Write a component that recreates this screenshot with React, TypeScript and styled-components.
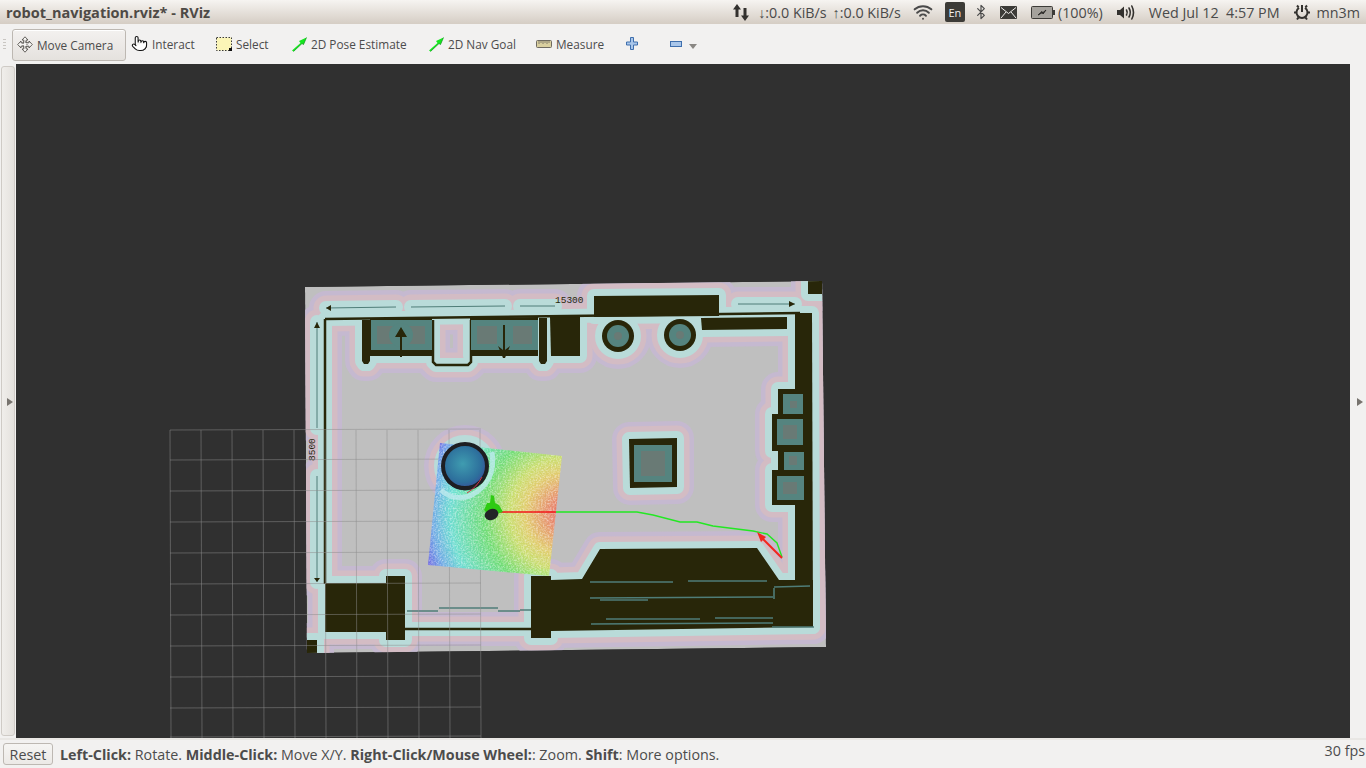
import React from "react"
import styled, { createGlobalStyle } from "styled-components"
import { Bluetooth, Pointer, Wifi } from "lucide-react"

const UI_FONT = `"Open Sans", "Noto Sans", "Liberation Sans", sans-serif`

const GlobalStyle = createGlobalStyle`
  html, body { margin: 0; padding: 0; overflow: hidden; }
  body { font-family: ${UI_FONT}; color: #4c4c4c; }
`

const Page = styled.div`
  width: 1366px;
  height: 768px;
  display: flex;
  flex-direction: column;
  background: #f2f1f0;
`

const TitleBar = styled.div`
  height: 24px;
  flex: none;
  display: flex;
  align-items: center;
  justify-content: space-between;
  padding: 0 6px;
  background: linear-gradient(#f6f4f1, #d5cdc4);
`

const WindowTitle = styled.div`
  font-size: 14.5px;
  font-weight: 700;
  color: #4e4a46;
`

const Indicators = styled.div`
  display: flex;
  align-items: center;
  height: 24px;
  font-size: 14.3px;
  color: #4a4a4a;
  white-space: nowrap;
`

const Indicator = styled.span<{ $left: number }>`
  display: flex;
  align-items: center;
  margin-left: ${p => p.$left}px;
`

const LangBox = styled.span`
  display: flex;
  align-items: center;
  justify-content: center;
  width: 20px;
  height: 20px;
  border-radius: 2px;
  background: #3c3b37;
  color: #f2f1f0;
  font-size: 11px;
`

const Toolbar = styled.div`
  height: 40px;
  flex: none;
  display: flex;
  align-items: center;
  padding-left: 3px;
  background: #f2f1f0;
  font-size: 11.8px;
`

const Grip = styled.div`
  width: 3px;
  height: 11px;
  margin-right: 6px;
  background: repeating-linear-gradient(#c9c6c2 0 1px, transparent 1px 3px);
`

const ToolButton = styled.div<{ $active?: boolean; $width: number; $gap?: number; $pad?: number }>`
  display: flex;
  align-items: center;
  gap: ${p => p.$gap ?? 3}px;
  width: ${p => p.$width}px;
  height: ${p => (p.$active ? 32 : 20)}px;
  flex: none;
  box-sizing: border-box;
  white-space: nowrap;
  padding-left: ${p => p.$pad ?? 4}px;
  border: ${p => (p.$active ? "1px solid #bdb8b2" : "none")};
  border-radius: 3px;
  background: ${p => (p.$active ? "linear-gradient(#f3f1ef, #e5e2de)" : "transparent")};
  box-shadow: ${p => (p.$active ? "0 1px 0 #fff inset" : "none")};
  margin-top: ${p => (p.$active ? 1 : -1)}px;
`

const Main = styled.div`
  flex: 1;
  min-height: 0;
  display: flex;
`

const Dock = styled.div`
  width: 16px;
  flex: none;
  box-sizing: border-box;
  display: flex;
  align-items: center;
  justify-content: center;
`

const LeftHandle = styled(Dock)`
  margin: 2px 1px;
  width: 14px;
  border: 1px solid #cfcbc6;
  border-radius: 3px;
  background: linear-gradient(90deg, #f0eeeb, #e4e1dd);
`

const Arrow = styled.div`
  width: 0;
  height: 0;
  margin: 2px 0 0 4px;
  border-top: 4px solid transparent;
  border-bottom: 4px solid transparent;
  border-left: 6px solid #77736e;
`

const Viewport = styled.svg`
  flex: 1;
  display: block;
  width: 1334px;
  height: 674px;
  background: #303030;
`

const StatusBar = styled.div`
  height: 30px;
  flex: none;
  box-sizing: border-box;
  display: flex;
  align-items: center;
  border-top: 2px solid #e9e7e4;
  padding: 0 1px 0 3px;
  font-size: 14.3px;
  background: #f2f1f0;
`

const ResetButton = styled.div`
  width: 50px;
  height: 22px;
  box-sizing: border-box;
  display: flex;
  align-items: center;
  justify-content: center;
  margin-right: 7px;
  border: 1px solid #bdb8b2;
  border-radius: 3px;
  background: linear-gradient(#f6f5f3, #ece9e6);
`

const Hint = styled.div`
  flex: 1;
  white-space: nowrap;
`

const Fps = styled.div`
  margin-top: -8px;
`

const CaretSvg = styled.svg`
  margin-top: 6px;
`

const GREEN = "#14e81e"

const PoseIcon = () => (
  <svg width="17" height="16" viewBox="0 0 17 16">
    <path d="M1 14.5 L9.5 7 L8 5 L15.5 1.5 L12.5 8.5 L11 7.5 L2.5 15.5 Z" fill={GREEN} />
    <path d="M2.5 15.5 L11 7.5 L12.5 8.5 L15.5 1.5" fill="none" stroke="#0b8f16" strokeWidth=".7" />
  </svg>
)

const MoveIcon = () => (
  <svg width="16" height="17" viewBox="0 0 16 17" fill="#f4f3f1" stroke="#55524e" strokeWidth=".9">
    <path d="M8 .8 L11 4 H9.2 V6.8 H12 V5 L15.3 8.5 L12 12 V10.2 H9.2 V13 H11 L8 16.2 L5 13 H6.8 V10.2 H4 V12 L.7 8.5 L4 5 V6.8 H6.8 V4 H5 Z" />
    <rect x="6" y="6" width="4" height="5" fill="none" strokeDasharray="1 1" />
  </svg>
)

const SelectIcon = () => (
  <svg width="16" height="14" viewBox="0 0 16 14">
    <rect x=".5" y=".5" width="15" height="13" fill="#fbf5b7" stroke="#3a3a3a" strokeDasharray="1.5 1.5" />
    <rect x="13" y="11" width="3" height="3" fill="#111" />
  </svg>
)

const RulerIcon = () => (
  <svg width="16" height="8" viewBox="0 0 16 8">
    <rect x=".5" y=".5" width="15" height="7" rx="1" fill="#d9cf9f" stroke="#6e6a60" />
    <path d="M3 1v3M5 1v2M7 1v3M9 1v2M11 1v3M13 1v2" stroke="#6e6a60" strokeWidth=".8" />
  </svg>
)

const PlusIcon = () => (
  <svg width="12" height="13" viewBox="0 0 12 13">
    <path d="M4.5 .5h3v4.5h4v3h-4v4.5h-3V8h-4V5h4z" fill="#a9c6ea" stroke="#3f6fad" />
  </svg>
)

const MinusIcon = () => (
  <svg width="12" height="6" viewBox="0 0 12 6">
    <rect x=".5" y=".5" width="11" height="5" fill="#a9c6ea" stroke="#3f6fad" />
  </svg>
)

const MenuCaret = () => (
  <CaretSvg width="8" height="5" viewBox="0 0 8 5">
    <path d="M0 0h8L4 5z" fill="#8a8783" />
  </CaretSvg>
)

const TransferIcon = () => (
  <svg width="16" height="17" viewBox="0 0 16 17" fill="#33312e">
    <path d="M4 0 L8 5.5 H5.5 V13 H2.5 V5.5 H0 Z" />
    <path d="M12 17 L16 11.5 H13.5 V4 H10.5 V11.5 H8 Z" />
  </svg>
)

const MailIcon = () => (
  <svg width="17" height="13" viewBox="0 0 17 13">
    <rect width="17" height="13" rx="1" fill="#3c3b37" />
    <path d="M1 1.5 L8.5 7.5 L16 1.5 M1 12 L6 6 M16 12 L11 6" stroke="#f0eeeb" strokeWidth="1" fill="none" />
  </svg>
)

const BatteryIcon = () => (
  <svg width="24" height="13" viewBox="0 0 24 13">
    <rect x=".5" y=".5" width="21" height="12" rx="1" fill="#a5a29c" stroke="#3c3b37" />
    <rect x="22" y="4" width="2" height="5" fill="#3c3b37" />
    <path d="M7 9 L11 5.5 L11.5 7 L15 4 L12 8 L11.5 6.5z" stroke="#2e2d2a" fill="#2e2d2a" />
  </svg>
)

const SpeakerIcon = () => (
  <svg width="20" height="17" viewBox="0 0 20 17" fill="none" stroke="#33312e" strokeWidth="1.6" strokeLinecap="round">
    <path d="M1 6 H4 L8 2.5 V14.5 L4 11 H1 Z" fill="#33312e" stroke="none" />
    <path d="M10.5 6 Q12 8.5 10.5 11" />
    <path d="M13 4 Q15.5 8.5 13 13" />
    <path d="M15.8 2 Q19.2 8.5 15.8 15" />
  </svg>
)

const SessionIcon = () => (
  <svg width="16" height="17" viewBox="0 0 16 17" fill="none" stroke="#33312e">
    <path d="M5 3.8 A5.5 5.5 0 1 0 11 3.8" strokeWidth="2" />
    <path d="M8 1 V8" strokeWidth="2" />
    <path d="M3 1.5 L4.6 3.4 M13 1.5 L11.4 3.4 M0 8.5 H2.4 M13.6 8.5 H16 M3 15.5 L4.6 13.4 M13 15.5 L11.4 13.4" strokeWidth="2" />
  </svg>
)

// every coordinate below is a screen pixel, the viewBox is the canvas rectangle
const MAP_EDGE = "305,287 822,281 826,647 307,653"

const SOLIDS = [
  "362,320 370,320 370,361 368,364 364,364 362,361",
  "370,318 432,318 432,356 370,356",
  "470,318 538,317 538,356 470,356",
  "539,318 547,318 547,361 545,364 541,364 539,361",
  "550,317 580,317 580,356 551,356",
  "594,296 719,295 719,316 594,317",
  "701,318 787,317 787,329 702,330",
  "795,313 812,313 813,627 795,627",
  "778,389 806,389 806,417 778,417",
  "772,414 806,414 806,451 772,451",
  "778,449 806,449 806,473 778,473",
  "772,470 806,470 806,505 772,505",
  "629,439 677,438 677,487 630,488",
  "531,576 551,576 551,580 582,579 600,549 757,548 779,580 813,580 813,627 551,631 551,638 531,638",
  "325,583 386,583 386,576 405,576 405,640 386,640 386,632 325,632",
  "808,281 822,281 822,294 808,294",
  "307,640 317,640 317,653 307,653",
]

const WALLS = [
  "325,319 325,584",
  "325,319 800,313",
  "405,629 531,629",
  "433,320 433,362 436,365 468,365 471,362 471,320",
]

const DIMENSIONS = [
  "326,308 396,307",
  "411,307 505,306",
  "520,306 555,306",
  "738,304 795,304",
  "317,322 317,428",
  "317,476 317,582",
]

const CIRCLES = [
  [618, 336, 16],
  [680, 335, 16],
  [465, 466, 24],
]

const TEAL = [
  [371, 320, 61, 32],
  [471, 320, 67, 32],
  [783, 394, 20, 20],
  [777, 419, 26, 26],
  [784, 452, 20, 18],
  [777, 476, 27, 24],
  [634, 445, 38, 37],
]

const CORES = [
  [377, 326, 48, 18],
  [477, 326, 20, 18],
  [513, 326, 19, 18],
  [790, 401, 7, 7],
  [783, 425, 14, 14],
  [789, 456, 8, 9],
  [783, 482, 14, 12],
  [641, 451, 24, 25],
]

const SCAN_LINES = [
  "590,582 673,582", "688,581 767,581", "590,598 773,597", "600,600 648,600",
  "606,619 700,619", "715,618 773,618", "591,624 773,623", "774,587 810,586",
  "774,588 774,599", "772,627 814,627", "407,611 438,611", "439,608 498,608",
  "498,611 520,611", "520,610 531,610",
]

const GRID_X = [170, 201, 232, 263, 294, 325, 356, 387, 418, 449, 480]
const GRID_Y = [430, 460, 491, 522, 553, 584, 615, 646, 677, 708, 737]

const Obstacles = () => (
  <>
    {SOLIDS.map(p => <polygon key={p} points={p} />)}
    {CIRCLES.map(([cx, cy, r]) => <circle key={cx} cx={cx} cy={cy} r={r} />)}
    {WALLS.map(p => <polyline key={p} points={p} fill="none" />)}
    {DIMENSIONS.map(p => <polyline key={p} points={p} fill="none" />)}
  </>
)

const Inflation = ({ color, width }: { color: string; width: number }) => (
  <g fill={color} stroke={color} strokeWidth={width} strokeLinejoin="round" strokeLinecap="round">
    <Obstacles />
  </g>
)

const MapLayer = () => (
  <g clipPath="url(#map-edge)">
    <polygon points={MAP_EDGE} fill="#bfbfbf" />
    <Inflation color="#c5b9d0" width={34} />
    <Inflation color="#d3bcc4" width={25} />
    <Inflation color="#b9dbd9" width={14} />
    <g fill="#282609">
      {SOLIDS.map(p => <polygon key={p} points={p} />)}
      {CIRCLES.slice(0, 2).map(([cx, cy, r]) => <circle key={cx} cx={cx} cy={cy} r={r} />)}
    </g>
    <g fill="none" stroke="#282609" strokeWidth="2.5">
      {WALLS.map(p => <polyline key={p} points={p} />)}
    </g>
    <g stroke="#4f7d78" fill="none">
      {DIMENSIONS.map(p => <polyline key={p} points={p} />)}
      {SCAN_LINES.map(p => <polyline key={p} points={p} strokeWidth="1.6" />)}
    </g>
    <g fill="#55847f">
      {TEAL.map(([x, y, w, h]) => <rect key={`${x}-${y}`} x={x} y={y} width={w} height={h} />)}
      <circle cx="618" cy="336" r="11" />
      <circle cx="680" cy="335" r="11" />
    </g>
    <g fill="#697a75">
      {CORES.map(([x, y, w, h]) => <rect key={`${x}-${y}`} x={x} y={y} width={w} height={h} />)}
      <circle cx="618" cy="336" r="4" />
      <circle cx="680" cy="335" r="4" />
    </g>
    <circle cx="401" cy="335" r="12" fill="#55847f" />
    <g fill="#282609">
      <rect x="370" y="350" width="62" height="6" />
      <rect x="470" y="350" width="68" height="6" />
      <path d="M400 357 V337 H395 L401 327 L407 337 H402 V357 Z" />
      <path d="M503 325 H505 V350 L510 346 L505 358 H503 L498 346 L503 350 Z" />
      <path d="M326 308 L331 305 V311 Z M795 304 L789 301 V307 Z M317 322 L314 328 H320 Z M317 582 L314 578 H320 Z" />
    </g>
    <text x="555" y="303" fontSize="9.5" fill="#282609" fontFamily="Liberation Mono, monospace">15300</text>
    <text x="315" y="461" fontSize="9.5" fill="#282609" fontFamily="Liberation Mono, monospace" transform="rotate(-90 315 461)">8500</text>
  </g>
)

const GridLayer = () => (
  <g stroke="#8e8e8e" strokeOpacity=".5">
    {GRID_X.map(x => <line key={x} x1={x} y1="430" x2={x + 1} y2="738" />)}
    {GRID_Y.map(y => <line key={y} x1="170" y1={y} x2="481" y2={y - 1} />)}
  </g>
)

const HEAT_EDGE = "440,443 562,456 549,576 428,565"

const CostCloud = () => (
  <g>
    <polygon points={HEAT_EDGE} fill="url(#heat)" opacity=".84" />
    <polygon points={HEAT_EDGE} fill="#fff" filter="url(#speckle)" />
    <path d="M492 452 Q497 482 470 496 Q452 501 441 490" fill="none" stroke="#bdeaee" strokeWidth="5" opacity=".8" />
    <circle cx="465" cy="466" r="22" fill="url(#pillar)" stroke="#1e1e22" strokeWidth="4" />
    <path d="M444 478 A24 24 0 0 0 486 478 A26 20 0 0 1 444 478 Z" fill="#1e1e22" />
    <path d="M467 493 Q477 487 482 477" fill="none" stroke="#d0354a" strokeWidth="1" />
  </g>
)

const RobotLayer = () => (
  <g>
    <polyline
      points="556,512 637,512 653,515 680,522 697,522 713,526 753,531 767,534 777,543 782,557"
      fill="none"
      stroke="#23e823"
      strokeWidth="1.4"
    />
    <line x1="497" y1="512" x2="556" y2="512" stroke="#f2161a" strokeWidth="1.6" />
    <path d="M484 510 L487 503 L490 503 L491 495 L494 496 L495 503 L499 505 L503 512 L490 516 Z" fill="#2ecb12" />
    <ellipse cx="491.5" cy="514.5" rx="7" ry="5.5" fill="#222426" transform="rotate(-22 491.5 514.5)" />
    <line x1="782" y1="558" x2="762" y2="538" stroke="#f2261e" strokeWidth="2" />
    <path d="M757 532 L766 537 L761 542 Z" fill="#f2261e" />
  </g>
)

const Definitions = () => (
  <defs>
    <clipPath id="map-edge">
      <polygon points={MAP_EDGE} />
    </clipPath>
    <radialGradient id="heat" gradientUnits="userSpaceOnUse" cx="567" cy="514" r="150">
      <stop offset="0" stopColor="#ee4a44" />
      <stop offset=".12" stopColor="#ee8560" />
      <stop offset=".28" stopColor="#e6cf5e" />
      <stop offset=".38" stopColor="#cbe25e" />
      <stop offset=".55" stopColor="#62e268" />
      <stop offset=".78" stopColor="#5ee2d4" />
      <stop offset=".9" stopColor="#62a4ec" />
      <stop offset="1" stopColor="#5e48e6" />
    </radialGradient>
    <radialGradient id="pillar" cx=".45" cy=".45" r=".6">
      <stop offset="0" stopColor="#3f9cb0" />
      <stop offset=".7" stopColor="#2d6f9c" />
      <stop offset="1" stopColor="#3b4a9a" />
    </radialGradient>
    <filter id="speckle" x="0" y="0" width="1" height="1">
      <feTurbulence type="fractalNoise" baseFrequency=".6" numOctaves="2" seed="4" />
      <feColorMatrix values="0 0 0 0 1  0 0 0 0 1  0 0 0 0 1  0 0 0 1.1 -.42" />
      <feComposite in2="SourceGraphic" operator="in" />
    </filter>
  </defs>
)

export default function App() {
  return (
    <Page>
      <GlobalStyle />

      <TitleBar>
        <WindowTitle>robot_navigation.rviz* - RViz</WindowTitle>
        <Indicators>
          <TransferIcon />
          <Indicator $left={9}>↓:0.0 KiB/s</Indicator>
          <Indicator $left={6}>↑:0.0 KiB/s</Indicator>
          <Indicator $left={12}><Wifi size={20} strokeWidth={2.4} /></Indicator>
          <Indicator $left={12}><LangBox>En</LangBox></Indicator>
          <Indicator $left={8}><Bluetooth size={16} strokeWidth={1.8} /></Indicator>
          <Indicator $left={11}><MailIcon /></Indicator>
          <Indicator $left={14}><BatteryIcon /></Indicator>
          <Indicator $left={3}>(100%)</Indicator>
          <Indicator $left={13}><SpeakerIcon /></Indicator>
          <Indicator $left={13}>Wed Jul 12&nbsp; 4:57 PM</Indicator>
          <Indicator $left={14}><SessionIcon /></Indicator>
          <Indicator $left={7}>mn3m</Indicator>
        </Indicators>
      </TitleBar>

      <Toolbar>
        <Grip />
        <ToolButton $active $width={114} $gap={4}><MoveIcon />Move Camera</ToolButton>
        <ToolButton $width={86} $pad={5} $gap={4}>
          <Pointer size={17} strokeWidth={1.5} color="#111" fill="#fff" />Interact
        </ToolButton>
        <ToolButton $width={75} $gap={4}><SelectIcon />Select</ToolButton>
        <ToolButton $width={137}><PoseIcon />2D Pose Estimate</ToolButton>
        <ToolButton $width={108}><PoseIcon />2D Nav Goal</ToolButton>
        <ToolButton $width={90} $gap={4}><RulerIcon />Measure</ToolButton>
        <ToolButton $width={44}><PlusIcon /></ToolButton>
        <ToolButton $width={36} $gap={7}><MinusIcon /><MenuCaret /></ToolButton>
      </Toolbar>

      <Main>
        <LeftHandle><Arrow /></LeftHandle>
        <Viewport viewBox="16 64 1334 674">
          <Definitions />
          <MapLayer />
          <GridLayer />
          <CostCloud />
          <RobotLayer />
        </Viewport>
        <Dock><Arrow /></Dock>
      </Main>

      <StatusBar>
        <ResetButton>Reset</ResetButton>
        <Hint>
          <b>Left-Click:</b> Rotate. <b>Middle-Click:</b> Move X/Y. <b>Right-Click/Mouse Wheel:</b>: Zoom.{" "}
          <b>Shift</b>: More options.
        </Hint>
        <Fps>30 fps</Fps>
      </StatusBar>
    </Page>
  )
}
